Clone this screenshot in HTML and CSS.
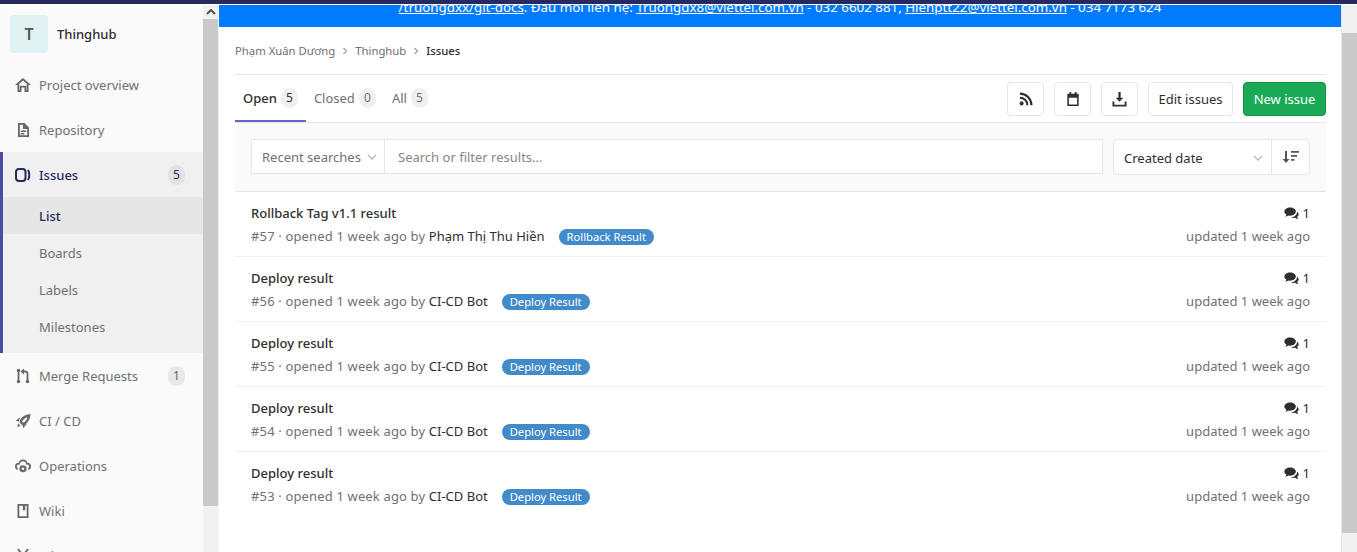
FILE: index.html
```html
<!DOCTYPE html>
<html lang="en">
<head>
    <meta charset="UTF-8">
    <title>Issues · Thinghub</title>
    <link rel="stylesheet" href="styles.css">
</head>
<body>

    <!-- shared comment icon -->
    <svg class="icon-defs">
        <symbol id="icon-comment" viewBox="0 0 16 14">
            <path d="M6.5.5c3.400 0 6.200 1.900 6.200 4.400s-2.800 4.400-6.200 4.400c-.6 0-1.200-.1-1.800-.2-1 .8-2.200 1.200-3.500 1.400.7-.7 1.200-1.500 1.300-2.400C1.100 7.400.3 6.200.3 4.900.3 2.400 3.100.5 6.500.5z"/>
            <path d="M14 5c1.100.8 1.700 1.800 1.700 2.900 0 1.100-.6 2-1.600 2.700.1.900.6 1.700 1.300 2.400-1.300-.1-2.500-.6-3.500-1.400-1.800.4-3.600.1-4.900-.7 3.500.1 7-1.900 7-5.900z"/>
        </symbol>
    </svg>

    <div class="topbar"></div>

    <div class="layout">

        <!-- Project sidebar -->
        <nav class="sidebar">
            <div class="context">
                <div class="avatar">T</div>
                <span class="context-name">Thinghub</span>
            </div>

            <a class="nav-item">
                <svg class="nav-icon" viewBox="0 0 16 16"><path d="M8 1 0 8h2.500v7h4v-4.500h3V15h4V8H16z M8 3.500l3.800 3.300v6.400h-.5V8.700H4.700v4.500h-.5V6.800z" fill-rule="evenodd"/></svg>
                <span>Project overview</span>
            </a>
            <a class="nav-item">
                <svg class="nav-icon" viewBox="0 0 16 16"><path d="M3 1h6.500L14 5.500V15H3z M4.800 2.800v10.400h7.400V7H8V2.800z M5.800 8.500h5.400V10H5.800z M5.800 11h3.500v1.500H5.800z" fill-rule="evenodd"/></svg>
                <span>Repository</span>
            </a>

            <div class="nav-group">
                <a class="nav-item nav-active">
                    <svg class="nav-icon" viewBox="0 0 16 16">
                        <rect x="1" y="2" width="9.500" height="12" rx="3" fill="none" stroke="#292961" stroke-width="2"/>
                        <path d="M13 3c1.700 2.500 1.700 7.500 0 10" fill="none" stroke="#292961" stroke-width="2"/>
                    </svg>
                    <span>Issues</span>
                    <span class="nav-count nav-count-active">5</span>
                </a>
                <a class="sub-item sub-active">List</a>
                <a class="sub-item">Boards</a>
                <a class="sub-item">Labels</a>
                <a class="sub-item">Milestones</a>
            </div>

            <a class="nav-item">
                <svg class="nav-icon" viewBox="0 0 16 16">
                    <path d="M3.500 1.500v13M12.500 14.500V5.500a2 2 0 0 0-2-2H8" fill="none" stroke="#666" stroke-width="1.800"/>
                    <circle cx="3.500" cy="2.500" r="1.700"/>
                    <circle cx="3.500" cy="13.500" r="1.700"/>
                    <circle cx="12.500" cy="13.500" r="1.700"/>
                    <path d="M9 .5v6L5.500 3.500z"/>
                </svg>
                <span>Merge Requests</span>
                <span class="nav-count">1</span>
            </a>
            <a class="nav-item">
                <svg class="nav-icon" viewBox="0 0 16 16">
                    <path d="M15.500 1c-4.500.2-8.300 2.500-10.300 6L4.500 9.500l2.800 2.800 2.700-.8c3.500-2.200 5.400-6 5.500-10.500z M12.500 4.200c-.4 2-1.600 3.800-3.400 5l-1.300.4-.6-.6.400-1.300c1.200-1.800 3-3.100 4.900-3.500z" fill-rule="evenodd"/>
                    <path d="M5.500 4 .8 7.800l2.900.8zM12 10.500l-3.800 4.700-.8-2.900zM3.200 10.500l2.300 2.300-3.500 1.200z"/>
                </svg>
                <span>CI / CD</span>
            </a>
            <a class="nav-item">
                <svg class="nav-icon" viewBox="0 0 16 16"><path d="M8 1.500a4.500 4.500 0 0 1 4.300 3.200A3.800 3.800 0 0 1 16 8.500a3.500 3.500 0 0 1-2.800 3.400v-1.800A1.800 1.800 0 0 0 14.200 8.500a2 2 0 0 0-3-1.700A3.200 3.200 0 0 0 8 3.300a3.200 3.200 0 0 0-3.200 3.500 2 2 0 0 0-3 1.700c0 .7.400 1.300 1 1.600v1.800A3.500 3.500 0 0 1 0 8.500a3.800 3.800 0 0 1 3.700-3.800A4.500 4.500 0 0 1 8 1.500z M8 7l1 .8 1.300-.2.500 1.200 1 .9-.6 1.100.6 1.100-1 .9-.5 1.200L9 13.800 8 14.500l-1-.7-1.300.2-.5-1.200-1-.9.6-1.100-.6-1.100 1-.9.5-1.200L7 7.800z M8 9.500a1.300 1.300 0 1 0 0 2.600 1.300 1.300 0 0 0 0-2.600z" fill-rule="evenodd"/></svg>
                <span>Operations</span>
            </a>
            <a class="nav-item">
                <svg class="nav-icon" viewBox="0 0 16 16"><path d="M2.500 1h11v14h-11z M4.300 2.800v10.400h7.400V2.800h-1.500v5L9 7l-1.200.8v-5z" fill-rule="evenodd"/></svg>
                <span>Wiki</span>
            </a>
            <a class="nav-item">
                <svg class="nav-icon" viewBox="0 0 16 16"><path d="M2 1h2l4 5 4-5h2L9.200 8 14 15h-2L8 10l-4 5H2l4.800-7z"/></svg>
                <span>Jobs</span>
            </a>
        </nav>

        <!-- Sidebar scrollbar -->
        <div class="side-scroll">
            <div class="side-scroll-btn">
                <svg width="10" height="6" viewBox="0 0 10 6"><path d="M1 5 5 1l4 4" fill="none" stroke="#505050" stroke-width="2"/></svg>
            </div>
            <div class="side-scroll-thumb"></div>
        </div>

        <main class="content">
            <div class="banner">
                <p class="banner-text"><a>/truongdxx/git-docs</a>. Đầu mối liên hệ: <a>Truongdx8@viettel.com.vn</a> - 032 6602 881, <a>Hienptt22@viettel.com.vn</a> - 034 7173 624</p>
            </div>

            <div class="page">
                <div class="breadcrumbs">
                    <span>Phạm Xuân Dương</span>
                    <svg class="crumb-sep" viewBox="0 0 8 8"><path d="M2.500 1l3 3-3 3" fill="none" stroke="#a0a0a0" stroke-width="1.200"/></svg>
                    <span>Thinghub</span>
                    <svg class="crumb-sep" viewBox="0 0 8 8"><path d="M2.500 1l3 3-3 3" fill="none" stroke="#a0a0a0" stroke-width="1.200"/></svg>
                    <span class="crumb-current">Issues</span>
                </div>

                <div class="tabs-row">
                    <ul class="tabs">
                        <li class="tab tab-active">Open <span class="tab-count">5</span></li>
                        <li class="tab">Closed <span class="tab-count">0</span></li>
                        <li class="tab">All <span class="tab-count">5</span></li>
                    </ul>
                    <div class="actions">
                        <button class="btn btn-icon">
                            <svg viewBox="0 0 16 16" width="14" height="14"><circle cx="3" cy="13" r="2.300" fill="#303030"/><path d="M1 6.500A8.500 8.500 0 0 1 9.500 15M1 1.800A13.200 13.200 0 0 1 14.200 15" fill="none" stroke="#303030" stroke-width="2.400"/></svg>
                        </button>
                        <button class="btn btn-icon">
                            <svg viewBox="0 0 16 16" width="14" height="14"><path d="M4 0h2v2h4V0h2v2h2.500v14h-13V2H4z M3.300 6.500v7.700h9.400V6.500z" fill="#303030" fill-rule="evenodd"/></svg>
                        </button>
                        <button class="btn btn-icon">
                            <svg viewBox="0 0 16 16" width="15" height="15"><path d="M6.800 0h2.400v6H12L8 10.500 4 6h2.800z M.5 10h2v3.500h11V10h2v5.500H.5z" fill="#303030"/></svg>
                        </button>
                        <button class="btn btn-edit">Edit issues</button>
                        <button class="btn btn-success">New issue</button>
                    </div>
                </div>

                <div class="filter-bar">
                    <div class="search-box">
                        <div class="recent">
                            <span>Recent searches</span>
                            <svg class="caret" viewBox="0 0 10 6"><path d="M1 1l4 4 4-4" fill="none" stroke="#bdbdbd" stroke-width="1.500"/></svg>
                        </div>
                        <div class="search-input">Search or filter results...</div>
                    </div>
                    <div class="sort-box">
                        <div class="sort-name">
                            <span>Created date</span>
                            <svg class="caret" viewBox="0 0 10 6"><path d="M1 1l4 4 4-4" fill="none" stroke="#bdbdbd" stroke-width="1.500"/></svg>
                        </div>
                        <div class="sort-dir">
                            <svg viewBox="0 0 18 14" width="18" height="14"><path d="M3 1h2v8h2.500L4 13 .5 9H3z M9 1h8v1.800H9z M9 5h6v1.800H9z M9 9h3.500v1.800H9z" fill="#555"/></svg>
                        </div>
                    </div>
                </div>

                <ul class="issues">
                    <li class="issue">
                        <div class="issue-main">
                            <div class="issue-title">Rollback Tag v1.1 result</div>
                            <div class="issue-meta">#57 · opened 1 week ago by <span class="author">Phạm Thị Thu Hiền</span><span class="label">Rollback Result</span></div>
                        </div>
                        <div class="issue-side">
                            <div class="notes"><svg class="note-icon"><use href="#icon-comment"/></svg><span>1</span></div>
                            <div class="updated">updated 1 week ago</div>
                        </div>
                    </li>
                    <li class="issue">
                        <div class="issue-main">
                            <div class="issue-title">Deploy result</div>
                            <div class="issue-meta">#56 · opened 1 week ago by <span class="author">CI-CD Bot</span><span class="label">Deploy Result</span></div>
                        </div>
                        <div class="issue-side">
                            <div class="notes"><svg class="note-icon"><use href="#icon-comment"/></svg><span>1</span></div>
                            <div class="updated">updated 1 week ago</div>
                        </div>
                    </li>
                    <li class="issue">
                        <div class="issue-main">
                            <div class="issue-title">Deploy result</div>
                            <div class="issue-meta">#55 · opened 1 week ago by <span class="author">CI-CD Bot</span><span class="label">Deploy Result</span></div>
                        </div>
                        <div class="issue-side">
                            <div class="notes"><svg class="note-icon"><use href="#icon-comment"/></svg><span>1</span></div>
                            <div class="updated">updated 1 week ago</div>
                        </div>
                    </li>
                    <li class="issue">
                        <div class="issue-main">
                            <div class="issue-title">Deploy result</div>
                            <div class="issue-meta">#54 · opened 1 week ago by <span class="author">CI-CD Bot</span><span class="label">Deploy Result</span></div>
                        </div>
                        <div class="issue-side">
                            <div class="notes"><svg class="note-icon"><use href="#icon-comment"/></svg><span>1</span></div>
                            <div class="updated">updated 1 week ago</div>
                        </div>
                    </li>
                    <li class="issue">
                        <div class="issue-main">
                            <div class="issue-title">Deploy result</div>
                            <div class="issue-meta">#53 · opened 1 week ago by <span class="author">CI-CD Bot</span><span class="label">Deploy Result</span></div>
                        </div>
                        <div class="issue-side">
                            <div class="notes"><svg class="note-icon"><use href="#icon-comment"/></svg><span>1</span></div>
                            <div class="updated">updated 1 week ago</div>
                        </div>
                    </li>
                </ul>
            </div>
        </main>

        <!-- Page scrollbar -->
        <div class="page-scroll">
            <div class="page-scroll-thumb"></div>
        </div>
    </div>

</body>
</html>
```

FILE: styles.css
```css
* {
    box-sizing: border-box;
}

html, body {
    height: 100%;
}

body {
    margin: 0;
    overflow: hidden;
    background-color: #fff;
    color: #2e2e2e;
    font-family: "Noto Sans", "Open Sans", sans-serif;
    font-size: 13px;
}

.icon-defs {
    display: none;
}

.topbar {
    height: 5px;
    background-color: #292961;
    border-bottom: 1px solid #fff;
}

.layout {
    display: flex;
    height: 547px;
    overflow: hidden;
}

/* sidebar */
.sidebar {
    width: 203px;
    flex-shrink: 0;
    height: 600px;
    background-color: #fafafa;
}

.context {
    display: flex;
    align-items: center;
    height: 57px;
    padding: 0 10px;
}

.avatar {
    display: flex;
    align-items: center;
    justify-content: center;
    width: 38px;
    height: 38px;
    background-color: #e0f2f1;
    border-radius: 4px;
    color: #555;
    font-size: 16px;
    font-weight: 600;
}

.context-name {
    margin-left: 9px;
    font-size: 13px;
    font-weight: 500;
    color: #2e2e2e;
}

.nav-item {
    display: flex;
    align-items: center;
    height: 45px;
    padding: 0 18px 0 15px;
    color: #707070;
}

.nav-icon {
    width: 16px;
    height: 16px;
    margin-right: 8px;
    fill: #666;
    flex-shrink: 0;
}

.nav-count {
    margin-left: auto;
    min-width: 17px;
    height: 20px;
    line-height: 20px;
    text-align: center;
    background-color: #e8e8e8;
    border-radius: 10px;
    font-size: 12px;
    color: #666;
}

.nav-group {
    padding-bottom: 8px;
    background-color: #f0f0f0;
    border-left: 3px solid #4b4ba3;
}

.nav-group .nav-item {
    padding-left: 12px;
}

.nav-active {
    color: #292961;
    font-weight: 500;
}

.nav-count-active {
    font-weight: 400;
    color: #292961;
    background-color: #e2e2e2;
}

.sub-item {
    display: block;
    height: 37px;
    line-height: 38px;
    padding-left: 36px;
    color: #707070;
}

.sub-active {
    background-color: #e6e6e6;
    color: #292961;
    font-weight: 500;
}

.side-scroll {
    width: 16px;
    flex-shrink: 0;
    background-color: #f1f1f1;
    border-right: 1px solid #f4f4f4;
}

.side-scroll-btn {
    display: flex;
    align-items: center;
    justify-content: center;
    height: 14px;
}

.side-scroll-thumb {
    height: 487px;
    background-color: #c9c9c9;
}

/* main column */
.content {
    flex: 1;
    min-width: 0;
    border-right: 1px solid #e5e5e5;
}

.banner {
    height: 22px;
    overflow: hidden;
    background-color: #007bff;
    color: #fff;
    text-align: center;
}

.banner-text {
    margin: -8px 0 0;
    line-height: 20px;
    font-size: 13.35px;
}

.banner-text a {
    text-decoration: underline;
}

.page {
    padding: 0 15px 0 16px;
}

.breadcrumbs {
    display: flex;
    align-items: center;
    height: 48px;
    border-bottom: 1px solid #e5e5e5;
    font-size: 11.3px;
    color: #707070;
}

.crumb-sep {
    width: 8px;
    height: 8px;
    margin: 0 6px;
}

.crumb-current {
    font-weight: 500;
    color: #2e2e2e;
}

.tabs-row {
    display: flex;
    justify-content: space-between;
    height: 48px;
    border-bottom: 1px solid #e5e5e5;
}

.tabs {
    display: flex;
    margin: 0;
    padding: 0;
    list-style: none;
}

.tab {
    display: flex;
    align-items: center;
    gap: 4px;
    height: 47px;
    padding: 0 8px;
    border-bottom: 2px solid transparent;
    color: #707070;
}

.tab-active {
    color: #2e2e2e;
    font-weight: 500;
    border-bottom-color: #6666c4;
}

.tab-count {
    min-width: 17px;
    height: 20px;
    line-height: 20px;
    text-align: center;
    background-color: #f0f0f0;
    border-radius: 10px;
    font-size: 12px;
    font-weight: 400;
}

.actions {
    display: flex;
    gap: 10px;
    padding-top: 7px;
}

.btn {
    height: 34px;
    padding: 0;
    background-color: #fff;
    border: 1px solid #e5e5e5;
    border-radius: 4px;
    color: #2e2e2e;
    font-family: inherit;
    font-size: 13px;
}

.btn-icon {
    display: flex;
    align-items: center;
    justify-content: center;
    width: 37px;
}

.btn-edit {
    width: 85px;
}

.btn-success {
    width: 83px;
    background-color: #1aaa55;
    border-color: #168f48;
    color: #fff;
}

.filter-bar {
    display: flex;
    justify-content: space-between;
    height: 69px;
    padding: 16px 16px 0;
    background-color: #fafafa;
    border-bottom: 1px solid #e5e5e5;
}

.search-box {
    display: flex;
    width: 852px;
    height: 35px;
    background-color: #fff;
    border: 1px solid #e5e5e5;
}

.recent {
    display: flex;
    align-items: center;
    justify-content: space-between;
    width: 133px;
    padding: 0 7px 0 10px;
    border-right: 1px solid #e5e5e5;
    color: #707070;
}

.caret {
    width: 10px;
    height: 6px;
}

.search-input {
    display: flex;
    align-items: center;
    padding-left: 13px;
    color: #868686;
}

.sort-box {
    display: flex;
    width: 197px;
    height: 36px;
    background-color: #fff;
    border: 1px solid #e5e5e5;
    border-radius: 4px;
}

.sort-name {
    display: flex;
    align-items: center;
    justify-content: space-between;
    flex: 1;
    padding: 1px 8px 0 10px;
    border-right: 1px solid #e5e5e5;
}

.sort-dir {
    display: flex;
    align-items: center;
    justify-content: center;
    width: 37px;
}

/* issue list */
.issues {
    margin: 0;
    padding: 0;
    list-style: none;
}

.issue {
    display: flex;
    justify-content: space-between;
    height: 65px;
    padding: 11px 16px 0;
    border-bottom: 1px solid #f0f0f0;
}

.issues .issue:last-child {
    border-bottom: none;
}

.issue-title {
    height: 21px;
    line-height: 21px;
    font-weight: 500;
    color: #2e2e2e;
}

.issue-meta {
    display: flex;
    align-items: center;
    height: 24px;
    white-space: pre;
    letter-spacing: 0.15px;
    color: #707070;
}

.author {
    letter-spacing: 0;
    color: #2e2e2e;
}

.label {
    height: 16px;
    line-height: 16px;
    margin: 2px 0 0 14px;
    padding: 0 8px;
    background-color: #428bca;
    border-radius: 8px;
    color: #fff;
    font-size: 11.2px;
    letter-spacing: 0;
}

.issue-side {
    text-align: right;
}

.notes {
    display: flex;
    align-items: center;
    justify-content: flex-end;
    gap: 4px;
    height: 20px;
}

.note-icon {
    width: 15px;
    height: 13px;
    fill: #2e2e2e;
}

.updated {
    height: 24px;
    margin-top: 1px;
    line-height: 24px;
    color: #707070;
}

.page-scroll {
    width: 15px;
    flex-shrink: 0;
    background-color: #f1f1f1;
}

.page-scroll-thumb {
    height: 500px;
    margin-top: 28px;
    background-color: #c9c9c9;
}
```
